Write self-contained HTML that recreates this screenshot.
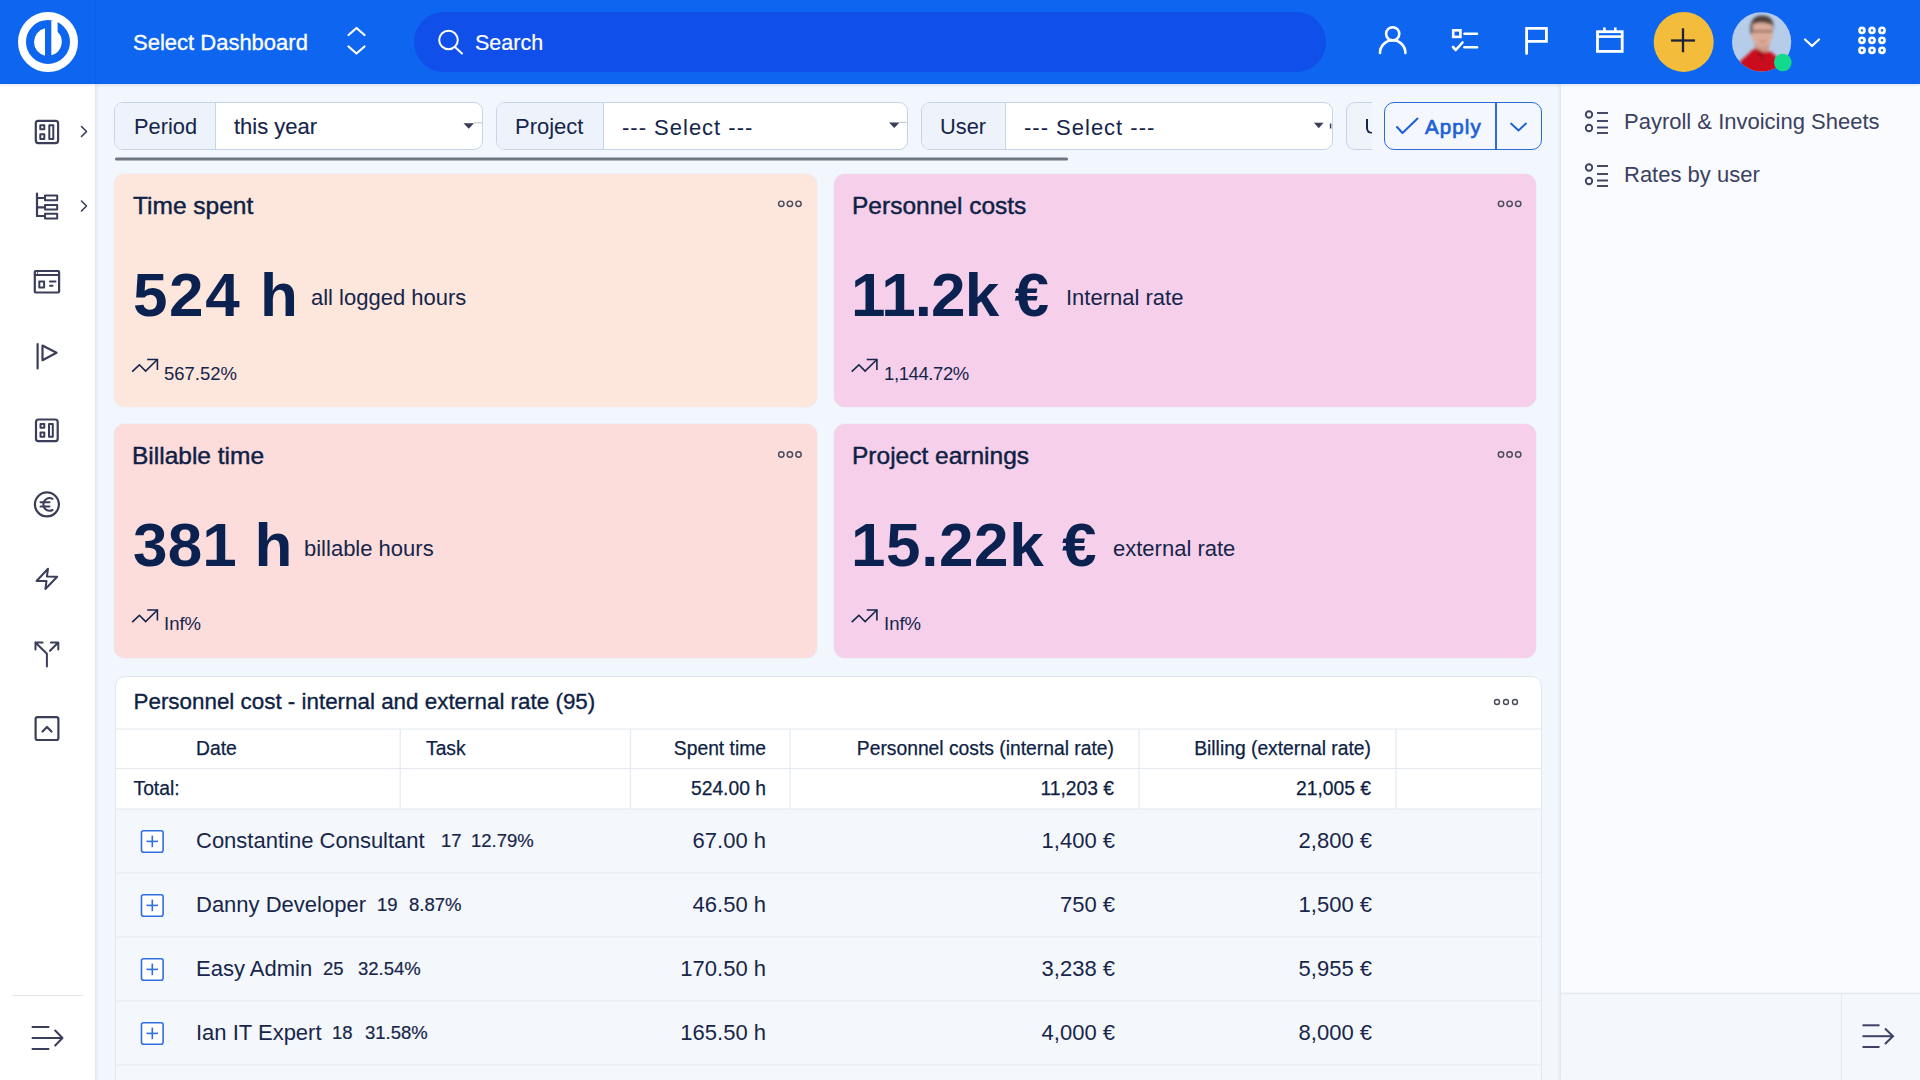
<!DOCTYPE html>
<html><head><meta charset="utf-8">
<style>
*{box-sizing:border-box;margin:0;padding:0}
html,body{width:1920px;height:1080px;overflow:hidden}
body{font-family:"Liberation Sans",sans-serif;background:#f2f6fd;color:#0e1e45;position:relative}
.a{position:absolute}
.t{position:absolute;white-space:nowrap;line-height:1}
#hdr{left:0;top:0;width:1920px;height:84px;background:#0e66f0;z-index:5;box-shadow:0 1px 3px rgba(20,40,90,.12)}
#side{left:0;top:84px;width:95px;height:996px;background:#fff;box-shadow:1px 0 4px rgba(50,60,60,.13)}
#rp{left:1561px;top:84px;width:359px;height:996px;background:#f9fbfe;box-shadow:-1px 0 4px rgba(50,60,60,.13)}
.card{position:absolute;border-radius:11px;box-shadow:0 0 1.5px rgba(60,40,60,.10)}
.fg{position:absolute;top:102px;height:48px;border:1px solid #c6d4ea;border-radius:9px;background:#fff;overflow:hidden}
.fg .lb{position:absolute;left:0;top:0;bottom:0;background:#eef3fb;border-right:1px solid #c6d4ea}
.ct{font-size:24.5px;color:#0f1f45;-webkit-text-stroke:0.45px #0f1f45}
.cn{font-size:62px;font-weight:700;color:#0b2150;letter-spacing:1.6px}
.cs{font-size:22px;color:#15254a}
.cp{font-size:18.5px;color:#15254a}
.th{font-size:19.3px;color:#0f1f45;-webkit-text-stroke:0.25px #0f1f45}
.tn{font-size:22px;color:#17264a}
.tc{font-size:18.5px;color:#17264a;-webkit-text-stroke:0.2px #17264a}
</style></head><body>
<div id="hdr" class="a">
<svg class="a" style="left:0;top:0" width="1920" height="84" viewBox="0 0 1920 84">
 <line x1="95.5" y1="0" x2="95.5" y2="84" stroke="#0b5ee6" stroke-width="1"/>
 <circle cx="48" cy="42" r="26" fill="none" stroke="#fff" stroke-width="8"/>
 <path d="M45 28.33 A14 14 0 0 0 45 55.67 Z" fill="#fff"/>
 <path d="M51.3 20.5 L57.6 20.5 L57.6 31.85 A14 14 0 0 1 51.3 55.3 Z" fill="#fff"/>
 <polyline points="348.5,35 356.5,28 364.5,35" fill="none" stroke="#fff" stroke-width="2.2" stroke-linecap="round" stroke-linejoin="round"/>
 <polyline points="348.5,46.5 356.5,53.5 364.5,46.5" fill="none" stroke="#fff" stroke-width="2.2" stroke-linecap="round" stroke-linejoin="round"/>
 <rect x="414" y="12" width="912" height="60" rx="30" fill="#104fea"/>
 <circle cx="448.5" cy="40" r="9.3" fill="none" stroke="#fff" stroke-width="2"/>
 <line x1="455.5" y1="47.5" x2="462" y2="53.5" stroke="#fff" stroke-width="2" stroke-linecap="round"/>
 <circle cx="1392.7" cy="33.8" r="6.6" fill="none" stroke="#fff" stroke-width="2.6"/>
 <path d="M1380 53 A12.7 12.7 0 0 1 1405.4 53" fill="none" stroke="#fff" stroke-width="2.6" stroke-linecap="round"/>
 <rect x="1453.2" y="30.3" width="7.2" height="6.6" fill="none" stroke="#fff" stroke-width="2.6"/>
 <line x1="1464.5" y1="33.7" x2="1477" y2="33.7" stroke="#fff" stroke-width="2.6" stroke-linecap="round"/>
 <line x1="1464.5" y1="47.2" x2="1477" y2="47.2" stroke="#fff" stroke-width="2.6" stroke-linecap="round"/>
 <polyline points="1453,47 1455.8,50 1462.5,42.5" fill="none" stroke="#fff" stroke-width="2.6" stroke-linecap="round" stroke-linejoin="round"/>
 <path d="M1526.6 53.5 V28.3 H1546.4 V41.3 H1526.6" fill="none" stroke="#fff" stroke-width="2.8" stroke-linecap="round"/>
 <rect x="1597.5" y="31.7" width="24.7" height="19.7" fill="none" stroke="#fff" stroke-width="2.8"/>
 <line x1="1597.5" y1="36.6" x2="1622.2" y2="36.6" stroke="#fff" stroke-width="2.6"/>
 <line x1="1604.4" y1="27.5" x2="1604.4" y2="31" stroke="#fff" stroke-width="2.6"/>
 <line x1="1615.3" y1="27.5" x2="1615.3" y2="31" stroke="#fff" stroke-width="2.6"/>
 <circle cx="1683.7" cy="41.9" r="30" fill="#f3bc3a"/>
 <line x1="1671" y1="40.5" x2="1695" y2="40.5" stroke="#1b2338" stroke-width="2.3"/>
 <line x1="1683" y1="28.3" x2="1683" y2="52.3" stroke="#1b2338" stroke-width="2.3"/>
 <defs><clipPath id="av"><circle cx="1761.6" cy="41.9" r="29.6"/></clipPath>
 <filter id="bl"><feGaussianBlur stdDeviation="1.6"/></filter></defs>
 <g clip-path="url(#av)">
  <rect x="1730" y="10" width="64" height="64" fill="#b6cdea"/>
  <g filter="url(#bl)">
  <path d="M1754 42 L1756 53 L1768 53 L1770 42 Z" fill="#cf9a88"/>
  <ellipse cx="1762" cy="32" rx="11" ry="14.5" fill="#dcab9a"/>
  <path d="M1750.5 34 Q1748.5 15.5 1762 15.5 Q1775 15.5 1773.5 30 L1772 25 Q1763 20.5 1753 24 L1752 34 Z" fill="#4e3f3a"/>
  <rect x="1751.5" y="30" width="21.5" height="2.6" rx="1.2" fill="#7d5f57" opacity="0.7"/>
  <path d="M1760 41 Q1763 43 1766 41" stroke="#b86e66" stroke-width="1.5" fill="none"/>
  <path d="M1736 74 L1740 61.5 L1754.6 48.3 L1762.8 52 L1770.3 51.5 L1776 56 L1780 74 Z" fill="#c9101d"/>
  <path d="M1754.6 48.3 L1762.8 52 L1764 62 Z" fill="#9b0a15"/>
  </g>
 </g>
 <circle cx="1782.8" cy="62.5" r="8.8" fill="#12d98b"/>
 <polyline points="1805,39.5 1812,46 1819,39.5" fill="none" stroke="#fff" stroke-width="2.2" stroke-linecap="round" stroke-linejoin="round"/>
 <g fill="none" stroke="#fff" stroke-width="2.6">
  <circle cx="1862" cy="30.4" r="2.5"/><circle cx="1872" cy="30.4" r="2.5"/><circle cx="1882" cy="30.4" r="2.6"/>
  <circle cx="1862" cy="40.3" r="2.6"/><circle cx="1872" cy="40.3" r="2.6"/><circle cx="1882" cy="40.3" r="2.6"/>
  <circle cx="1862" cy="50.3" r="2.6"/><circle cx="1872" cy="50.3" r="2.6"/><circle cx="1882" cy="50.3" r="2.6"/>
 </g>
</svg>
<div class="t" style="left:133px;top:32px;font-size:22px;color:#fff;-webkit-text-stroke:0.3px #fff">Select Dashboard</div>
<div class="t" style="left:475px;top:32.5px;font-size:21.5px;color:#fff;-webkit-text-stroke:0.2px #fff">Search</div>
</div>
<div id="side" class="a">
<svg class="a" style="left:0;top:-84px" width="95" height="1080" viewBox="0 0 95 1080">
<g fill="none" stroke="#3a3e5a" stroke-width="2.2" stroke-linecap="round" stroke-linejoin="round">
 <rect x="35.8" y="120.8" width="22.3" height="22.3" rx="2.5"/>
 <rect x="40.3" y="125.3" width="4" height="4" stroke-width="2"/>
 <rect x="40.3" y="134.3" width="4" height="4.6" stroke-width="2"/>
 <rect x="49.3" y="125.3" width="4" height="13.6" stroke-width="2"/>
 <polyline points="81.5,126.5 86.5,131.5 81.5,136.5" stroke-width="1.6"/>
 <line x1="37" y1="193.5" x2="37" y2="216"/>
 <line x1="37" y1="198" x2="45" y2="198"/><line x1="37" y1="207.3" x2="45" y2="207.3"/><line x1="37" y1="216" x2="45" y2="216"/>
 <rect x="45" y="195.6" width="12.2" height="4.6" stroke-width="2"/>
 <rect x="45" y="205" width="12.2" height="4.6" stroke-width="2"/>
 <rect x="45" y="213.8" width="12.2" height="4.6" stroke-width="2"/>
 <polyline points="81.5,201 86.5,206 81.5,211" stroke-width="1.6"/>
 <rect x="34.8" y="271" width="24.3" height="21.5" rx="1"/>
 <line x1="34.8" y1="275" x2="59" y2="275" stroke-width="2"/>
 <line x1="37.5" y1="273" x2="37.6" y2="273" stroke-width="1.6"/>
 <rect x="39.3" y="281.5" width="4.8" height="6" stroke-width="2"/>
 <line x1="50" y1="281.5" x2="55.5" y2="281.5" stroke-width="2"/><line x1="50" y1="285.8" x2="52.5" y2="285.8" stroke-width="2"/>
 <line x1="37.6" y1="344" x2="37.6" y2="368.5"/>
 <path d="M42.5 345.5 L56.5 352.8 L42.5 360.2 Z"/>
 <rect x="36" y="419.5" width="21.7" height="21.7" rx="2.5"/>
 <rect x="40.5" y="424" width="3.8" height="3.8" stroke-width="2"/>
 <rect x="40.5" y="432.5" width="3.8" height="4.3" stroke-width="2"/>
 <rect x="49" y="424" width="3.8" height="12.8" stroke-width="2"/>
 <circle cx="46.9" cy="504.4" r="12"/>
 <path d="M52.5 498.8 A6.3 6.3 0 1 0 52.5 510" stroke-width="2"/>
 <line x1="40.5" y1="502.3" x2="49.5" y2="502.3" stroke-width="2"/><line x1="40.5" y1="506.5" x2="49.5" y2="506.5" stroke-width="2"/>
 <path d="M48 568.8 L36.6 581 L46.5 581 L45.4 589 L57.2 576.7 L46.9 576.5 Z" stroke-width="2"/>
 <path d="M46.9 666.5 V653.8 L35.4 642.5 M35.5 649.5 V642.5 H42.6" stroke-width="2"/>
 <path d="M50 650.8 L58.3 642.5 M58.3 649.5 V642.5 H50.9" stroke-width="2"/>
 <rect x="35.6" y="717.2" width="22.8" height="22.8" rx="2"/>
 <polyline points="42.5,731.5 47,727 51.5,731.5"/>
 <line x1="12" y1="995.5" x2="83" y2="995.5" stroke="#e3e6ec" stroke-width="1"/>
 <line x1="32.5" y1="1027" x2="48.5" y2="1027" stroke-width="2"/>
 <line x1="32.5" y1="1038" x2="62" y2="1038" stroke-width="2"/>
 <line x1="32.5" y1="1049" x2="48.5" y2="1049" stroke-width="2"/>
 <polyline points="55.2,1030.5 62.5,1038 55.2,1045.5" stroke-width="2"/>
</g>
</svg>
</div>

<!-- FILTER BAR -->
<div class="fg" style="left:114px;width:369px"><div class="lb" style="width:101px"></div></div>
<div class="t" style="left:134px;top:116px;font-size:21.8px;color:#15254a">Period</div>
<div class="t" style="left:234px;top:115.5px;font-size:22px;color:#15254a;-webkit-text-stroke:0.15px #15254a">this year</div>
<div class="fg" style="left:496px;width:412px"><div class="lb" style="width:107px"></div></div>
<div class="t" style="left:515px;top:116px;font-size:22px;color:#15254a">Project</div>
<div class="t" style="left:622px;top:116.5px;font-size:22px;color:#15254a;letter-spacing:1px">--- Select ---</div>
<div class="fg" style="left:921px;width:412px"><div class="lb" style="width:84px"></div></div>
<div class="t" style="left:940px;top:116px;font-size:21.8px;color:#15254a">User</div>
<div class="t" style="left:1024px;top:116.5px;font-size:22px;color:#15254a;letter-spacing:1px">--- Select ---</div>
<div class="fg" style="left:1345.5px;width:26.5px;border-right:none;border-radius:9px 0 0 9px;background:#eff4fb"></div>
<div class="a" style="left:1365.5px;top:118.5px;width:8px;height:15px;border-left:2.3px solid #15254a;border-bottom:2.3px solid #15254a;border-radius:0 0 0 6px;clip-path:inset(0 1.5px 0 0)"></div>
<div class="a" style="left:1384px;top:102px;width:158px;height:48px;border:1.8px solid #2a6ad9;border-radius:10px;background:#f4f7fd"></div>
<div class="a" style="left:1494.5px;top:102px;width:2.2px;height:48px;background:#2a6ad9"></div>
<div class="t" style="left:1425px;top:117px;font-size:20.5px;letter-spacing:1.1px;color:#1b5fd8;-webkit-text-stroke:0.7px #1b5fd8">Apply</div>
<svg class="a" style="left:0;top:0" width="1560" height="170" viewBox="0 0 1560 170">
 <path d="M463.5 123.3 H474 L468.75 128.8 Z" fill="#3a3e5a"/>
 <line x1="474" y1="122.8" x2="482" y2="122.8" stroke="#b9c0cc" stroke-width="1"/>
 <line x1="899.5" y1="122.3" x2="907" y2="122.3" stroke="#b9c0cc" stroke-width="1"/>
 <path d="M889 122.5 H899.5 L894.25 128 Z" fill="#3a3e5a"/>
 <path d="M1314 122.8 H1323.5 L1318.75 128.3 Z" fill="#3a3e5a"/>
 <line x1="1330.6" y1="123.5" x2="1330.6" y2="128.5" stroke="#3a3e5a" stroke-width="1.5"/>
 <polyline points="1397,127 1402.5,133 1417.5,118.5" fill="none" stroke="#1b5fd8" stroke-width="2" stroke-linecap="round" stroke-linejoin="round"/>
 <polyline points="1511,123.5 1518.5,130.5 1526,123.5" fill="none" stroke="#1b5fd8" stroke-width="1.8" stroke-linecap="round" stroke-linejoin="round"/>
 <line x1="116.5" y1="159" x2="1066.5" y2="159" stroke="#6e7684" stroke-width="3.2" stroke-linecap="round"/>
</svg>

<!-- CARDS -->
<div class="card" style="left:114px;top:174px;width:703px;height:233px;background:#fde6dc"></div>
<div class="card" style="left:834px;top:174px;width:702px;height:233px;background:#f6d0ea"></div>
<div class="card" style="left:114px;top:424px;width:703px;height:234px;background:#fddcdc"></div>
<div class="card" style="left:834px;top:424px;width:702px;height:234px;background:#f6d0ea"></div>
<div class="t ct" style="left:133px;top:194px">Time spent</div>
<div class="t ct" style="left:852px;top:194px">Personnel costs</div>
<div class="t ct" style="left:132px;top:444px">Billable time</div>
<div class="t ct" style="left:852px;top:444px">Project earnings</div>
<div class="t cn" style="left:133px;top:263.5px">524 h</div>
<div class="t cn" style="left:851px;top:263.5px;letter-spacing:-0.9px">11.2k €</div>
<div class="t cn" style="left:133px;top:513.5px;letter-spacing:0.2px">381 h</div>
<div class="t cn" style="left:851px;top:513.5px;letter-spacing:0.6px">15.22k €</div>
<div class="t cs" style="left:311px;top:286.5px">all logged hours</div>
<div class="t cs" style="left:1066px;top:286.5px">Internal rate</div>
<div class="t cs" style="left:304px;top:537.5px">billable hours</div>
<div class="t cs" style="left:1113px;top:537.5px">external rate</div>
<div class="t cp" style="left:164px;top:364.5px">567.52%</div>
<div class="t cp" style="left:884px;top:364.5px;letter-spacing:-0.4px">1,144.72%</div>
<div class="t cp" style="left:164px;top:615px">Inf%</div>
<div class="t cp" style="left:884px;top:615px">Inf%</div>
<svg class="a" style="left:0;top:0" width="1560" height="680" viewBox="0 0 1560 680">
 <defs>
  <g id="trend"><polyline points="0.2,12.6 7.4,5.8 13.6,12.1 25.4,0.5" fill="none" stroke="#15254a" stroke-width="1.6" stroke-linejoin="miter"/><polyline points="15.2,0.5 25.4,0.5 25.4,11" fill="none" stroke="#15254a" stroke-width="1.6"/></g>
  <g id="dots" fill="none" stroke="#4a4c5c" stroke-width="1.45"><circle cx="0" cy="0" r="2.7"/><circle cx="8.6" cy="0" r="2.7"/><circle cx="17.2" cy="0" r="2.7"/></g>
 </defs>
 <use href="#trend" x="132" y="359"/><use href="#trend" x="851.5" y="359"/>
 <use href="#trend" x="132" y="609.5"/><use href="#trend" x="851.5" y="609.5"/>
 <use href="#dots" x="781.3" y="203.8"/><use href="#dots" x="1501" y="203.8"/>
 <use href="#dots" x="781.3" y="454.5"/><use href="#dots" x="1501" y="454.5"/>
</svg>

<!-- TABLE -->
<div class="a" style="left:114.5px;top:676px;width:1427px;height:420px;background:#fff;border:1px solid #e2e7ef;border-radius:10px;overflow:hidden">
 <div class="a" style="left:0;top:132px;width:1427px;height:300px;background:#f4f7fc"></div>
</div>
<div class="t" style="left:133.5px;top:691px;font-size:22.4px;color:#0f1f45;-webkit-text-stroke:0.35px #0f1f45">Personnel cost - internal and external rate (95)</div>
<svg class="a" style="left:0;top:660px" width="1560" height="420" viewBox="0 660 1560 420">
 <g fill="none" stroke="#e4e9f0" stroke-width="1.2">
  <line x1="115" y1="729" x2="1541" y2="729"/>
  <line x1="115" y1="768.5" x2="1541" y2="768.5"/>
  <line x1="115" y1="809" x2="1541" y2="809"/>
  <line x1="115" y1="873" x2="1541" y2="873"/>
  <line x1="115" y1="937" x2="1541" y2="937"/>
  <line x1="115" y1="1001" x2="1541" y2="1001"/>
  <line x1="115" y1="1065" x2="1541" y2="1065"/>
  <line x1="400.2" y1="729" x2="400.2" y2="809"/>
  <line x1="630.5" y1="729" x2="630.5" y2="809"/>
  <line x1="790" y1="729" x2="790" y2="809"/>
  <line x1="1139" y1="729" x2="1139" y2="809"/>
  <line x1="1396" y1="729" x2="1396" y2="809"/>
 </g>
 <g fill="none" stroke="#4a4c5c" stroke-width="1.4"><circle cx="1497" cy="702" r="2.5"/><circle cx="1506" cy="702" r="2.5"/><circle cx="1515" cy="702" r="2.5"/></g>
 <rect x="141.5" y="830.7" width="21.6" height="21.6" rx="2" fill="#fff" stroke="#2f6fdc" stroke-width="1.6"/>
 <line x1="146.5" y1="841.4" x2="158" y2="841.4" stroke="#2f6fdc" stroke-width="1.6"/><line x1="152.3" y1="835.6" x2="152.3" y2="847.2" stroke="#2f6fdc" stroke-width="1.6"/>
 <rect x="141.5" y="894.7" width="21.6" height="21.6" rx="2" fill="#fff" stroke="#2f6fdc" stroke-width="1.6"/>
 <line x1="146.5" y1="905.4" x2="158" y2="905.4" stroke="#2f6fdc" stroke-width="1.6"/><line x1="152.3" y1="899.6" x2="152.3" y2="911.2" stroke="#2f6fdc" stroke-width="1.6"/>
 <rect x="141.5" y="958.7" width="21.6" height="21.6" rx="2" fill="#fff" stroke="#2f6fdc" stroke-width="1.6"/>
 <line x1="146.5" y1="969.4" x2="158" y2="969.4" stroke="#2f6fdc" stroke-width="1.6"/><line x1="152.3" y1="963.6" x2="152.3" y2="975.2" stroke="#2f6fdc" stroke-width="1.6"/>
 <rect x="141.5" y="1022.7" width="21.6" height="21.6" rx="2" fill="#fff" stroke="#2f6fdc" stroke-width="1.6"/>
 <line x1="146.5" y1="1033.4" x2="158" y2="1033.4" stroke="#2f6fdc" stroke-width="1.6"/><line x1="152.3" y1="1027.6" x2="152.3" y2="1039.2" stroke="#2f6fdc" stroke-width="1.6"/>
</svg>
<div class="t th" style="left:196px;top:739px">Date</div>
<div class="t th" style="left:426px;top:739px">Task</div>
<div class="t th" style="right:1154px;top:739px">Spent time</div>
<div class="t th" style="right:806px;top:739px">Personnel costs (internal rate)</div>
<div class="t th" style="right:549px;top:739px">Billing (external rate)</div>
<div class="t th" style="left:133.5px;top:779px">Total:</div>
<div class="t th" style="right:1154px;top:779px">524.00 h</div>
<div class="t th" style="right:806px;top:779px">11,203 €</div>
<div class="t th" style="right:549px;top:779px">21,005 €</div>
<div class="t tn" style="left:196px;top:830px">Constantine Consultant</div>
<div class="t tc" style="left:441px;top:832px">17</div>
<div class="t tc" style="left:471px;top:832px">12.79%</div>
<div class="t tn" style="right:1154px;top:830px">67.00 h</div>
<div class="t tn" style="right:805px;top:830px">1,400 €</div>
<div class="t tn" style="right:548px;top:830px">2,800 €</div>
<div class="t tn" style="left:196px;top:894px">Danny Developer</div>
<div class="t tc" style="left:377px;top:896px">19</div>
<div class="t tc" style="left:409px;top:896px">8.87%</div>
<div class="t tn" style="right:1154px;top:894px">46.50 h</div>
<div class="t tn" style="right:805px;top:894px">750 €</div>
<div class="t tn" style="right:548px;top:894px">1,500 €</div>
<div class="t tn" style="left:196px;top:958px">Easy Admin</div>
<div class="t tc" style="left:323px;top:960px">25</div>
<div class="t tc" style="left:358px;top:960px">32.54%</div>
<div class="t tn" style="right:1154px;top:958px">170.50 h</div>
<div class="t tn" style="right:805px;top:958px">3,238 €</div>
<div class="t tn" style="right:548px;top:958px">5,955 €</div>
<div class="t tn" style="left:196px;top:1022px">Ian IT Expert</div>
<div class="t tc" style="left:332px;top:1024px">18</div>
<div class="t tc" style="left:365px;top:1024px">31.58%</div>
<div class="t tn" style="right:1154px;top:1022px">165.50 h</div>
<div class="t tn" style="right:805px;top:1022px">4,000 €</div>
<div class="t tn" style="right:548px;top:1022px">8,000 €</div>
<div id="rp" class="a">
<svg class="a" style="left:0;top:-84px" width="359" height="1080" viewBox="1561 0 359 1080">
<g fill="none" stroke="#3d4263" stroke-width="1.9">
 <circle cx="1589" cy="114.5" r="3.2"/><circle cx="1589" cy="128" r="3.2"/>
 <line x1="1597" y1="113" x2="1608" y2="113"/><line x1="1597" y1="121" x2="1608" y2="121"/><line x1="1597" y1="127.5" x2="1608" y2="127.5"/><line x1="1597" y1="133" x2="1608" y2="133"/>
 <circle cx="1589" cy="167.5" r="3.2"/><circle cx="1589" cy="181" r="3.2"/>
 <line x1="1597" y1="166" x2="1608" y2="166"/><line x1="1597" y1="174" x2="1608" y2="174"/><line x1="1597" y1="180.5" x2="1608" y2="180.5"/><line x1="1597" y1="186" x2="1608" y2="186"/>
 <rect x="1561" y="994" width="359" height="86" fill="#f4f7fc" stroke="none"/>
 <line x1="1560" y1="993.5" x2="1920" y2="993.5" stroke="#e6e9ef" stroke-width="1.5"/>
 <line x1="1841.5" y1="994" x2="1841.5" y2="1080" stroke="#e6e9ef" stroke-width="1"/>
 <line x1="1862.5" y1="1025.3" x2="1879.5" y2="1025.3" stroke-width="2"/>
 <line x1="1862.5" y1="1036.2" x2="1892.5" y2="1036.2" stroke-width="2"/>
 <line x1="1862.5" y1="1047" x2="1879.5" y2="1047" stroke-width="2"/>
 <polyline points="1885,1028.5 1893,1036.2 1885,1044" stroke-width="2"/>
</g>
</svg>
<div class="t" style="left:63px;top:27px;font-size:22px;color:#3b4160">Payroll &amp; Invoicing Sheets</div>
<div class="t" style="left:63px;top:80px;font-size:22px;color:#3b4160">Rates by user</div>
</div>
</body></html>
